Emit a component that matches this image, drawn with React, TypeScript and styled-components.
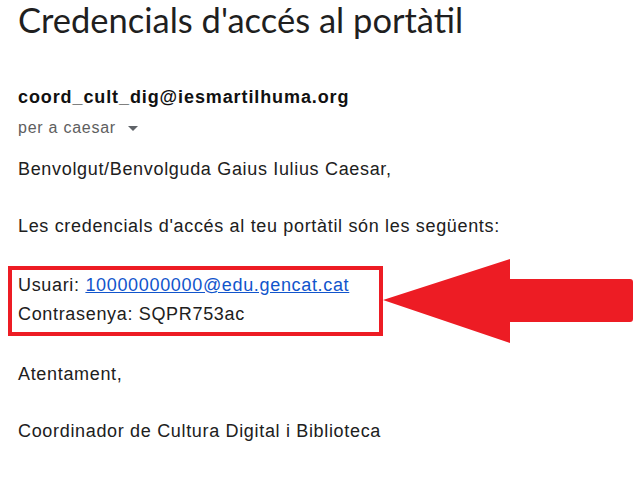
import styled, { createGlobalStyle } from 'styled-components'

const GlobalStyle = createGlobalStyle`
  html, body {
    margin: 0;
    padding: 0;
    background: #ffffff;
  }
  body {
    font-family: "Liberation Sans", Arial, sans-serif;
    color: #202020;
  }
`

function App () {
  return (
    <>
      <GlobalStyle />
      <Page>
        <Title>Credencials d'accés al portàtil</Title>

        <Sender>coord_cult_dig@iesmartilhuma.org</Sender>
        <Recipient>
          per a caesar
          <Caret viewBox="0 0 10 5" aria-hidden="true">
            <path d="M0 0 L10 0 L5 5 Z" />
          </Caret>
        </Recipient>

        <Body>
          <Line>Benvolgut/Benvolguda Gaius Iulius Caesar,</Line>
          <Line>Les credencials d'accés al teu portàtil són les següents:</Line>

          <CredentialsRow>
            <Highlight>
              <Line>
                Usuari: <MailLink href="mailto:10000000000@edu.gencat.cat">10000000000@edu.gencat.cat</MailLink>
              </Line>
              <Line>Contrasenya: SQPR753ac</Line>
            </Highlight>
            <Arrow viewBox="0 0 250 84" aria-hidden="true">
              <path d="M0 41 L127 0 L127 20 L247 20 Q250 20 250 23 L250 60 Q250 63 247 63 L127 63 L127 84 Z" />
            </Arrow>
          </CredentialsRow>

          <Line>Atentament,</Line>
          <Line>Coordinador de Cultura Digital i Biblioteca</Line>
        </Body>
      </Page>
    </>
  )
}

const Page = styled.div`
  width: 641px;
  height: 478px;
  box-sizing: border-box;
  padding: 0 0 0 18px;
  overflow: hidden;
`

const Title = styled.h1`
  margin: 0;
  font-family: Lato, "Open Sans", sans-serif;
  font-weight: 400;
  font-size: 34.5px;
  line-height: 40px;
  color: #1f1f1f;
  white-space: nowrap;
`

const Sender = styled.div`
  margin-top: 46px;
  font-weight: 700;
  font-size: 18px;
  line-height: 22px;
  letter-spacing: 0.9px;
  color: #111111;
`

const Recipient = styled.div`
  margin-top: 10px;
  display: flex;
  align-items: center;
  gap: 12px;
  font-size: 16px;
  line-height: 20px;
  letter-spacing: 0.75px;
  color: #5e5e5e;
`

const Caret = styled.svg`
  width: 10px;
  height: 5px;
  fill: #5f6368;
  margin-top: 1px;
`

const Body = styled.div`
  margin-top: 17px;
  display: flex;
  flex-direction: column;
  gap: 28px;
  font-size: 18px;
  line-height: 29px;
  letter-spacing: 0.67px;
  color: #202020;
`

const Line = styled.div`
  white-space: nowrap;
`

const CredentialsRow = styled.div`
  position: relative;
  margin: -3px 0 -4px -10px;
`

const Highlight = styled.div`
  width: 375px;
  box-sizing: border-box;
  border: 4px solid #ed1c24;
  padding: 1px 6px 3px;
  display: flex;
  flex-direction: column;
`

const MailLink = styled.a`
  color: #1155cc;
  text-decoration: underline;
`

const Arrow = styled.svg`
  position: absolute;
  left: 375px;
  top: -7px;
  width: 250px;
  height: 84px;
  fill: #ed1c24;
`

export default App
